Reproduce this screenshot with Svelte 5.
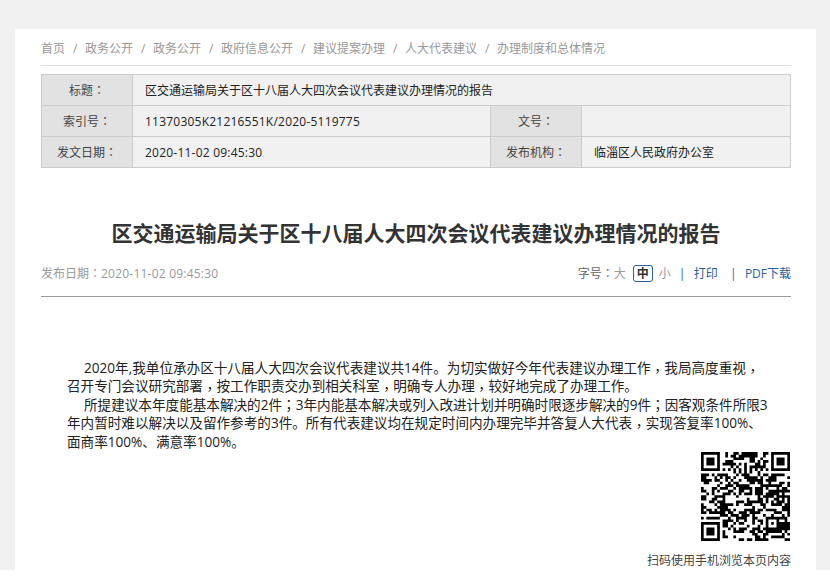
<script>
  const crumbs = ["首页", "政务公开", "政务公开", "政府信息公开", "建议提案办理", "人大代表建议", "办理制度和总体情况"];
  const paragraphs = [
    "2020年,我单位承办区十八届人大四次会议代表建议共14件。为切实做好今年代表建议办理工作，我局高度重视，召开专门会议研究部署，按工作职责交办到相关科室，明确专人办理，较好地完成了办理工作。",
    "所提建议本年度能基本解决的2件；3年内能基本解决或列入改进计划并明确时限逐步解决的9件；因客观条件所限3年内暂时难以解决以及留作参考的3件。所有代表建议均在规定时间内办理完毕并答复人大代表，实现答复率100%、面商率100%、满意率100%。"
  ];
  // odd entries are the punctuation marks
  const split = (text) => text.split(/([，；])/);

  // version 4 sized code, 33 modules
  const size = 33;
  const finder = (r, c, x, y) => {
    const i = r - y, j = c - x;
    if (i < 0 || j < 0 || i > 6 || j > 6) return null;
    return i === 0 || i === 6 || j === 0 || j === 6 || (i > 1 && i < 5 && j > 1 && j < 5);
  };
  const align = (r, c) => {
    const i = Math.abs(r - 26), j = Math.abs(c - 26);
    if (i > 2 || j > 2) return null;
    return i === 2 || j === 2 || (i === 0 && j === 0);
  };
  let seed = 7;
  const rand = () => (seed = (seed * 16807) % 2147483647) / 2147483647;
  let qrPath = "";
  for (let r = 0; r < size; r++) {
    for (let c = 0; c < size; c++) {
      const f = finder(r, c, 0, 0) ?? finder(r, c, size - 7, 0) ?? finder(r, c, 0, size - 7) ?? align(r, c);
      const quiet = (r < 8 && c < 8) || (r < 8 && c >= size - 8) || (r >= size - 8 && c < 8);
      let on;
      if (f !== null) on = f;
      else if (quiet) on = false;
      else if (r === 6) on = c % 2 === 0;
      else if (c === 6) on = r % 2 === 0;
      else on = rand() > 0.5;
      if (on) qrPath += `M${c} ${r}h1v1h-1z`;
    }
  }
</script>

<div class="page">
  <main class="sheet">
    <nav class="crumbs">
      {#each crumbs as crumb, i}
        {#if i > 0}<span class="sep">/</span>{/if}
        <a href="#top">{crumb}</a>
      {/each}
    </nav>

    <table class="meta">
      <colgroup>
        <col class="label" />
        <col class="value" />
        <col class="label" />
        <col />
      </colgroup>
      <tbody>
        <tr>
          <th>标题<span class="mark">：</span></th>
          <td colspan="3">区交通运输局关于区十八届人大四次会议代表建议办理情况的报告</td>
        </tr>
        <tr>
          <th>索引号<span class="mark">：</span></th>
          <td class="num">11370305K21216551K/2020-5119775</td>
          <th>文号<span class="mark">：</span></th>
          <td></td>
        </tr>
        <tr>
          <th>发文日期<span class="mark">：</span></th>
          <td class="num">2020-11-02 09:45:30</td>
          <th>发布机构<span class="mark">：</span></th>
          <td>临淄区人民政府办公室</td>
        </tr>
      </tbody>
    </table>

    <h1>区交通运输局关于区十八届人大四次会议代表建议办理情况的报告</h1>

    <div class="info">
      <span class="date">发布日期<span class="mark">：</span><span class="num">2020-11-02 09:45:30</span></span>
      <div class="tools">
        <span class="label-size">字号<span class="mark">：</span></span><span class="size">大</span><span class="size current">中</span><span class="size">小</span>
        <i class="bar first">|</i><a href="#top">打印</a><i class="bar">|</i><a href="#top">PDF下载</a>
      </div>
    </div>

    <article>
      {#each paragraphs as text}
        <p>{#each split(text) as part, i}{#if i % 2}<span class={part === "，" ? "mark comma" : "mark"}>{part}</span>{:else}{part}{/if}{/each}</p>
      {/each}
    </article>

    <figure class="qr">
      <svg width="89" height="89" viewBox="0 0 {size} {size}">
        <path d={qrPath} fill="#000" />
      </svg>
      <figcaption>扫码使用手机浏览本页内容</figcaption>
    </figure>
  </main>
</div>

<style>
  :global(body) {
    background: #fff;
  }
  .page {
    height: 570px;
    overflow: hidden;
    box-sizing: border-box;
    padding: 29px 14px 0 15px;
    background: #f1f1f1;
    font-family: "Open Sans", "Noto Sans CJK SC", sans-serif;
    font-size: 12px;
    color: #333;
    text-spacing-trim: space-all;
  }
  .sheet {
    background: #fff;
    height: 541px;
    padding: 0 25px 0 26px;
  }
  /* TC punctuation sits in the middle of its box, like the original font */
  .mark {
    display: inline-block;
    width: 1em;
    line-height: 1;
    text-indent: 0;
    font-family: "Noto Sans CJK TC", sans-serif;
  }
  .comma {
    transform: translateY(0.22em);
  }
  .num {
    letter-spacing: 0.22px;
  }
  .crumbs {
    display: flex;
    align-items: center;
    box-sizing: border-box;
    height: 37px;
    padding-top: 2px;
    gap: 8px;
    border-bottom: 1px solid #ddd;
    color: #999;
  }
  .crumbs a {
    color: #999;
    text-decoration: none;
  }
  .sep {
    width: 4px;
  }
  .meta {
    width: 750px;
    margin-top: 8px;
    border-collapse: collapse;
    table-layout: fixed;
    background: #f1f1f1;
  }
  col.label {
    width: 91px;
  }
  col.value {
    width: 358px;
  }
  .meta th,
  .meta td {
    height: 30px;
    padding: 0;
    border: 1px solid #ccc;
    font-weight: normal;
  }
  .meta th {
    background: #e2e2e2;
    text-align: center;
    color: #444;
  }
  .meta td {
    padding-left: 12px;
    color: #222;
  }
  h1 {
    margin: 50px 0 0;
    font-size: 21px;
    line-height: 30px;
    text-align: center;
    color: #333;
  }
  .info {
    display: flex;
    justify-content: space-between;
    align-items: flex-start;
    margin-top: 17px;
    height: 32px;
    box-sizing: border-box;
    border-bottom: 1px solid #999;
  }
  .date {
    color: #999;
    line-height: 17px;
  }
  .tools {
    display: flex;
    align-items: center;
    line-height: 17px;
    color: #666;
  }
  .tools a {
    color: #2b6199;
    text-decoration: none;
  }
  .size {
    color: #999;
  }
  .current {
    box-sizing: border-box;
    width: 20px;
    height: 17px;
    margin: 0 6px 0 7px;
    border: 1px solid #2b5c9c;
    border-radius: 3px;
    color: #333;
    font-weight: bold;
    line-height: 15px;
    text-align: center;
  }
  .bar {
    width: 3px;
    margin: 0 12px;
    font-style: normal;
    text-align: center;
    color: #2b6199;
  }
  .bar.first {
    margin-left: 8px;
  }
  article {
    margin-top: 62px;
    padding: 0 22px 0 26px;
    font-size: 13.6px;
    line-height: 18.4px;
    color: #222;
  }
  article p {
    margin: 0;
    text-indent: 17px;
  }
  .qr {
    margin: 0;
    display: flex;
    flex-direction: column;
    align-items: flex-end;
    color: #444;
  }
  .qr svg {
    display: block;
    margin: 1px 1px 0 0;
  }
  figcaption {
    margin-top: 13px;
    line-height: 14px;
  }
</style>
